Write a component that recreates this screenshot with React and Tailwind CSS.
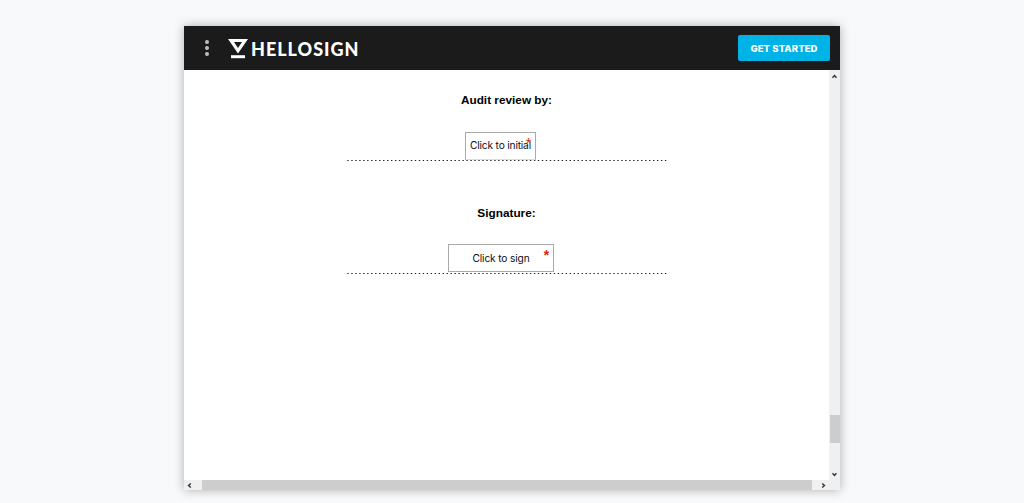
function Arrow({ d }) {
  return (
    <svg className="h-[5px] w-[5px] shrink-0" viewBox="0 0 5 5" fill="none" stroke="#333" strokeWidth="1.4">
      <path d={d} />
    </svg>
  );
}

function Logo() {
  return (
    <div className="flex items-center">
      <svg className="mt-px h-5 w-5" viewBox="0 0 20 20" fill="#fff">
        <path fillRule="evenodd" d="M0 0h20L10 14.5zM6 3l4 6 4-6z" />
        <path d="M3 16.2h14v3H3z" />
      </svg>
      <svg className="ml-[3px] h-5 w-[110px]" viewBox="0 0 110 20">
        <text
          x="0"
          y="17.5"
          textLength="107.5"
          fill="#fff"
          className="font-['Lato',sans-serif] text-[18px] font-black"
        >
          HELLOSIGN
        </text>
      </svg>
    </div>
  );
}

function Header() {
  return (
    <header className="flex h-[44px] shrink-0 items-center bg-[#1b1b1b] pr-[10px] pl-[21px]">
      <div className="mr-[19px] flex w-1 flex-col gap-[2px]">
        <span className="h-1 w-1 rounded-full bg-[#bdbdbd]" />
        <span className="h-1 w-1 rounded-full bg-[#bdbdbd]" />
        <span className="h-1 w-1 rounded-full bg-[#bdbdbd]" />
      </div>
      <Logo />
      <button className="ml-auto h-[26px] w-[92px] rounded-[2px] bg-[#00b3e6] pt-[2px] font-['Inter',sans-serif] text-[9.5px] font-extrabold tracking-[0.1px] text-white">
        GET STARTED
      </button>
    </header>
  );
}

function DottedLine() {
  return (
    <svg className="relative block h-[3px] w-[320px]" viewBox="0 0 320 3">
      <line x1="0.3" y1="1.5" x2="320" y2="1.5" stroke="#222" strokeWidth="1.2" strokeDasharray="1.4 2.57" />
    </svg>
  );
}

function Field({ label, className, markClassName }) {
  return (
    <div
      className={`relative flex h-[28px] justify-center border border-[#aaa] bg-white font-['Inter',sans-serif] text-[10.2px] whitespace-nowrap text-[#0c0c1c] ${className}`}
    >
      {label}
      <span
        className={`absolute font-['Liberation_Sans',sans-serif] text-[14px] leading-[14px] text-[#d6260c] ${markClassName}`}
      >
        *
      </span>
    </div>
  );
}

function Title({ children }) {
  return (
    <h2 className="h-4 font-['Liberation_Sans',sans-serif] text-[11.8px] leading-4 font-bold text-black">
      {children}
    </h2>
  );
}

function App() {
  return (
    <div className="h-[503px] overflow-hidden bg-[#f7f9fa] pt-[26px] pl-[184px]">
      <div className="flex h-[464px] w-[656px] flex-col bg-white shadow-[0_0_10px_rgba(0,0,0,0.3)]">
        <Header />
        <div className="flex min-h-0 flex-1">
          <div className="flex w-[645px] flex-col">
            <main className="flex h-[410px] flex-col items-center pt-[22px]">
              <Title>Audit review by:</Title>
              <Field
                label="Click to initial"
                className="mt-[24px] mr-[12px] w-[71px] border-b-[#ddd] leading-[24px] tracking-[-0.18px]"
                markClassName="top-[3px] right-[4px]"
              />
              <div className="-mt-px">
                <DottedLine />
              </div>
              <div className="mt-[43px]">
                <Title>Signature:</Title>
              </div>
              <Field
                label="Click to sign"
                className="mt-[23px] mr-[11px] w-[106px] leading-[26px] tracking-[-0.15px]"
                markClassName="top-[3px] right-[4px] font-bold"
              />
              <DottedLine />
            </main>
            <div className="flex h-[10px] items-center bg-[#f0f0f0] pl-[3px]">
              <Arrow d="M3.8 0.5L1.5 2.5l2.3 2" />
              <div className="mr-[9px] ml-[10px] h-full w-[610px] bg-[#cdcdcd]" />
              <Arrow d="M1.2 0.5l2.3 2-2.3 2" />
            </div>
          </div>
          <div className="flex w-[11px] flex-col items-center bg-[#f0f0f0] pt-[4px] pb-[13px]">
            <Arrow d="M0.5 3.8l2-2.3 2 2.3" />
            <div className="mt-auto mb-[29px] h-[28px] w-[10px] shrink-0 bg-[#cdcdcd]" />
            <Arrow d="M0.5 1.2l2 2.3 2-2.3" />
          </div>
        </div>
      </div>
    </div>
  );
}

export default App;
